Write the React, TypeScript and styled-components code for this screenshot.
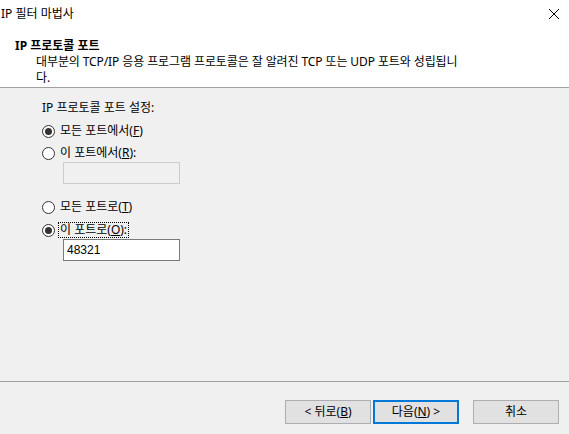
import React from "react";
import styled, { createGlobalStyle } from "styled-components";

const Global = createGlobalStyle`
  html, body { margin: 0; padding: 0; background: #f0f0f0; }
  body {
    font-family: "Noto Sans", "Noto Sans CJK KR", sans-serif;
    font-size: 12px;
    color: #000;
  }
`;

const Window = styled.div`
  width: 569px;
  height: 434px;
  display: flex;
  flex-direction: column;
  background: #f0f0f0;
  overflow: hidden;
`;

const Top = styled.div`
  background: #fff;
  height: 88px;
  border-bottom: 1px solid #a0a0a0;
  box-sizing: border-box;
  display: flex;
  flex-direction: column;
`;

const TitleBar = styled.div`
  height: 28px;
  display: flex;
  align-items: center;
  justify-content: space-between;
  padding: 0 6px 0 1px;
`;

const TitleText = styled.span`
  font-size: 12px;
  line-height: 16px;
`;

const CloseBtn = styled.div`
  width: 12px;
  height: 12px;
  display: flex;
  margin-right: 3px;
`;

const Header = styled.div`
  padding: 10px 0 0 15px;
  display: flex;
  flex-direction: column;
`;

const HeaderTitle = styled.div`
  font-weight: 700;
  line-height: 16px;
`;

const HeaderDesc = styled.div`
  padding-left: 21px;
  line-height: 16px;
  letter-spacing: -0.1px;
`;

const Body = styled.div`
  flex: 1;
  padding: 12px 0 0 42px;
  display: flex;
  flex-direction: column;
  align-items: flex-start;
`;

const GroupLabel = styled.div`
  line-height: 16px;
`;

const RadioRow = styled.label<{ $top: number }>`
  display: flex;
  align-items: center;
  height: 16px;
  margin-top: ${(p) => p.$top}px;
`;

const RadioCircle = styled.span<{ $checked?: boolean }>`
  width: 13px;
  height: 13px;
  box-sizing: border-box;
  border: 1px solid #333;
  border-radius: 50%;
  background: #fff;
  display: flex;
  align-items: center;
  justify-content: center;
  margin-right: 3px;
  &::after {
    content: "";
    width: 7px;
    height: 7px;
    border-radius: 50%;
    background: #333;
    display: ${(p) => (p.$checked ? "block" : "none")};
  }
`;

const RadioText = styled.span<{ $focused?: boolean }>`
  line-height: 14px;
  padding: 0 1px;
  border: 1px dotted ${(p) => (p.$focused ? "#000" : "transparent")};
`;

const TextBox = styled.div<{ $disabled?: boolean }>`
  margin: 1px 0 0 21px;
  width: 117px;
  height: 22px;
  box-sizing: border-box;
  border: 1px solid ${(p) => (p.$disabled ? "#cccccc" : "#7a7a7a")};
  background: ${(p) => (p.$disabled ? "#f0f0f0" : "#fff")};
  padding: 0 3px;
  display: flex;
  align-items: center;
  font-family: "Liberation Sans", "Noto Sans CJK KR", sans-serif;
  font-size: 12px;
`;

const Footer = styled.div`
  height: 53px;
  border-top: 1px solid #a0a0a0;
  box-sizing: border-box;
  display: flex;
  justify-content: flex-end;
  align-items: flex-start;
  padding: 18px 10px 0 0;
`;

const Button = styled.div<{ $default?: boolean; $gap?: number }>`
  width: 86px;
  height: 24px;
  box-sizing: border-box;
  background: #e1e1e1;
  border: ${(p) => (p.$default ? "2px solid #0078d7" : "1px solid #adadad")};
  display: flex;
  align-items: center;
  justify-content: center;
  margin-left: ${(p) => p.$gap ?? 0}px;
  line-height: 16px;
`;

export default function App() {
  return (
    <Window>
      <Global />
      <Top>
        <TitleBar>
          <TitleText>IP 필터 마법사</TitleText>
          <CloseBtn>
            <svg width="12" height="12" viewBox="0 0 12 12">
              <path d="M1 1 L11 11 M11 1 L1 11" stroke="#000" strokeWidth="1" fill="none" />
            </svg>
          </CloseBtn>
        </TitleBar>
        <Header>
          <HeaderTitle>IP 프로토콜 포트</HeaderTitle>
          <HeaderDesc>
            대부분의 TCP/IP 응용 프로그램 프로토콜은 잘 알려진 TCP 또는 UDP 포트와 성립됩니
            <br />
            다.
          </HeaderDesc>
        </Header>
      </Top>
      <Body>
        <GroupLabel>IP 프로토콜 포트 설정:</GroupLabel>
        <RadioRow $top={7}>
          <RadioCircle $checked />
          <RadioText>
            모든 포트에서(<u>F</u>)
          </RadioText>
        </RadioRow>
        <RadioRow $top={6}>
          <RadioCircle />
          <RadioText>
            이 포트에서(<u>R</u>):
          </RadioText>
        </RadioRow>
        <TextBox $disabled />
        <RadioRow $top={15}>
          <RadioCircle />
          <RadioText>
            모든 포트로(<u>T</u>)
          </RadioText>
        </RadioRow>
        <RadioRow $top={7}>
          <RadioCircle $checked />
          <RadioText $focused>
            이 포트로(<u>O</u>):
          </RadioText>
        </RadioRow>
        <TextBox>48321</TextBox>
      </Body>
      <Footer>
        <Button>
          &lt; 뒤로(<u>B</u>)
        </Button>
        <Button $default $gap={2}>
          다음(<u>N</u>) &gt;
        </Button>
        <Button $gap={14}>취소</Button>
      </Footer>
    </Window>
  );
}
